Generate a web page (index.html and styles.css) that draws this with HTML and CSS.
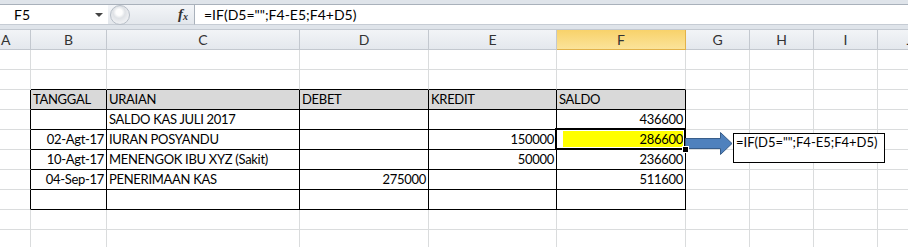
FILE: index.html
```html
<!DOCTYPE html>
<html lang="id">

<head>
  <meta charset="UTF-8">
  <meta name="viewport" content="width=device-width, initial-scale=1.0">
  <title>Kas Posyandu</title>
  <link rel="stylesheet" href="styles.css">
</head>

<body>
  <!-- Formula bar -->
  <div class="formula-bar">
    <div class="name-box">
      <span class="name">F5</span>
      <span class="drop"></span>
    </div>
    <div class="fx-box">
      <span class="grip"></span>
      <span class="fx">f<sub>x</sub></span>
    </div>
    <div class="formula">=IF(D5="";F4-E5;F4+D5)</div>
  </div>

  <!-- Worksheet -->
  <div class="sheet-wrap">
    <div class="sheet">
      <div class="h">A</div><div class="h">B</div><div class="h">C</div><div class="h">D</div><div class="h">E</div><div class="h active">F</div><div class="h">G</div><div class="h">H</div><div class="h">I</div><div class="h">J</div>

      <div class="c"></div><div class="c"></div><div class="c"></div><div class="c"></div><div class="c"></div><div class="c"></div><div class="c"></div><div class="c"></div><div class="c"></div><div class="c"></div>

      <div class="c"></div><div class="c bt"></div><div class="c bt"></div><div class="c bt"></div><div class="c bt"></div><div class="c bt"></div><div class="c"></div><div class="c"></div><div class="c"></div><div class="c"></div>

      <div class="c bl"></div><div class="c bx th">TANGGAL</div><div class="c bx th">URAIAN</div><div class="c bx th">DEBET</div><div class="c bx th">KREDIT</div><div class="c bx th">SALDO</div><div class="c"></div><div class="c"></div><div class="c"></div><div class="c"></div>

      <div class="c bl"></div><div class="c bx"></div><div class="c bx">SALDO KAS JULI 2017</div><div class="c bx"></div><div class="c bx"></div><div class="c bx num">436600</div><div class="c"></div><div class="c"></div><div class="c"></div><div class="c"></div>

      <div class="c bl"></div><div class="c bx num">02-Agt-17</div><div class="c bx">IURAN POSYANDU</div><div class="c bx"></div><div class="c bx num">150000</div><div class="c bx num sel">286600</div><div class="c"></div><div class="c"></div><div class="c"></div><div class="c"></div>

      <div class="c bl"></div><div class="c bx num">10-Agt-17</div><div class="c bx">MENENGOK IBU XYZ (Sakit)</div><div class="c bx"></div><div class="c bx num">50000</div><div class="c bx num">236600</div><div class="c"></div><div class="c"></div><div class="c"></div><div class="c"></div>

      <div class="c bl"></div><div class="c bx num">04-Sep-17</div><div class="c bx">PENERIMAAN KAS</div><div class="c bx num">275000</div><div class="c bx"></div><div class="c bx num">511600</div><div class="c"></div><div class="c"></div><div class="c"></div><div class="c"></div>

      <div class="c bl"></div><div class="c bx"></div><div class="c bx"></div><div class="c bx"></div><div class="c bx"></div><div class="c bx"></div><div class="c"></div><div class="c"></div><div class="c"></div><div class="c"></div>

      <div class="c"></div><div class="c"></div><div class="c"></div><div class="c"></div><div class="c"></div><div class="c"></div><div class="c"></div><div class="c"></div><div class="c"></div><div class="c"></div>

      <div class="c"></div><div class="c"></div><div class="c"></div><div class="c"></div><div class="c"></div><div class="c"></div><div class="c"></div><div class="c"></div><div class="c"></div><div class="c"></div>
    </div>

    <!-- Callout: arrow + formula note -->
    <svg class="arrow" width="48" height="25" viewBox="0 0 48 25">
      <path d="M0.5 7.5 H35.5 V1.5 L47 12.5 L35.5 23.5 V17.5 H0.5 Z" fill="#4f81bd" stroke="#385d8a" stroke-width="1" />
    </svg>
    <div class="note">=IF(D5="";F4-E5;F4+D5)</div>
  </div>
</body>

</html>
```

FILE: styles.css
```css
body {
  margin: 0;
  background-color: #fff;
  font-family: Lato, "Open Sans", sans-serif;
  font-size: 14px;
  color: #000;
  overflow: hidden;
}

/* formula bar */
.formula-bar {
  display: flex;
  height: 21px;
  padding: 4px 0 4px;
  background: #dfe4ea;
  border-bottom: 1px solid #c3c9d1;
}

.name-box {
  display: flex;
  align-items: center;
  justify-content: space-between;
  width: 108px;
  box-sizing: border-box;
  padding: 0 5px 0 14px;
  background: #fff;
  border-top: 1px solid #a9b1bb;
  border-bottom: 1px solid #c6ccd4;
}

.name,
.formula {
  line-height: 19px;
}

.drop {
  width: 0;
  height: 0;
  border-left: 4px solid transparent;
  border-right: 4px solid transparent;
  border-top: 4px solid #444;
}

.fx-box {
  display: flex;
  align-items: center;
  justify-content: space-between;
  width: 86px;
  box-sizing: border-box;
  padding: 0 6px 0 2px;
  background: linear-gradient(#f3f5f8, #e3e7ec);
  border-top: 1px solid #a9b1bb;
  border-bottom: 1px solid #c6ccd4;
}

.grip {
  width: 20px;
  height: 20px;
  border-radius: 50%;
  background: radial-gradient(circle at 45% 35%, #fdfdfd 0 3px, #dfe2e6 6px, #eceef1 10px);
  border: 1px solid #b7bec7;
  box-sizing: border-box;
}

.fx {
  font-family: "Liberation Serif", serif;
  font-style: italic;
  font-weight: bold;
  font-size: 15px;
  color: #333;
}

.fx sub {
  font-size: 10px;
  vertical-align: -1px;
}

.formula {
  flex: 1;
  padding-left: 9px;
  background: #fff;
  border-top: 1px solid #a9b1bb;
  border-bottom: 1px solid #c6ccd4;
  border-left: 1px solid #a9b1bb;
}

/* worksheet grid */
.sheet-wrap {
  position: relative;
  overflow: hidden;
}

.sheet {
  display: grid;
  grid-template-columns: 31px 76px 193px 129px 128px 129px 64px 64px 64px 64px;
  grid-auto-rows: 20px;
}

.h,
.c {
  box-sizing: border-box;
  line-height: 19px;
  white-space: nowrap;
  overflow: hidden;
}

.h {
  text-align: center;
  color: #333;
  background: linear-gradient(#f2f4f7, #e4e8ed);
  border-right: 1px solid #c3c8cf;
  border-bottom: 1px solid #c3c8cf;
}

.h:first-child {
  text-align: left;
  padding-left: 1px;
}

.h.active {
  background: linear-gradient(#f8d26a, #fbe39a);
  border-right-color: #e2b24a;
  border-bottom-color: #e2b24a;
}

.c {
  padding: 0 2px;
  font-size: 13px;
  letter-spacing: -0.3px;
  border-right: 1px solid #dadcdd;
  border-bottom: 1px solid #dadcdd;
}

/* the bordered table */
.bt {
  border-bottom-color: #000;
}

.bl {
  border-right-color: #000;
}

.bx {
  border-right-color: #000;
  border-bottom-color: #000;
}

.th {
  background-color: #d9d9d9;
}

.num {
  text-align: right;
}

.sel {
  position: relative;
  overflow: visible;
  background: linear-gradient(to right, #fff 0 6px, #ffff00 6px);
}

.sel::after {
  content: "";
  position: absolute;
  left: -2px;
  top: -2px;
  right: -1px;
  bottom: -1px;
  border: 2px solid #000;
  box-shadow: inset 0 0 0 1px #fff;
}

.sel::before {
  content: "";
  position: absolute;
  right: -4px;
  bottom: -4px;
  width: 5px;
  height: 5px;
  background: #000;
  border: 1px solid #fff;
  z-index: 1;
}

.arrow {
  position: absolute;
  left: 685px;
  top: 101px;
}

.note {
  position: absolute;
  left: 733px;
  top: 103px;
  width: 152px;
  height: 30px;
  box-sizing: border-box;
  padding: 0 2px;
  font-size: 13px;
  line-height: 17px;
  white-space: nowrap;
  background: #fff;
  border: 1px solid #000;
}
```
